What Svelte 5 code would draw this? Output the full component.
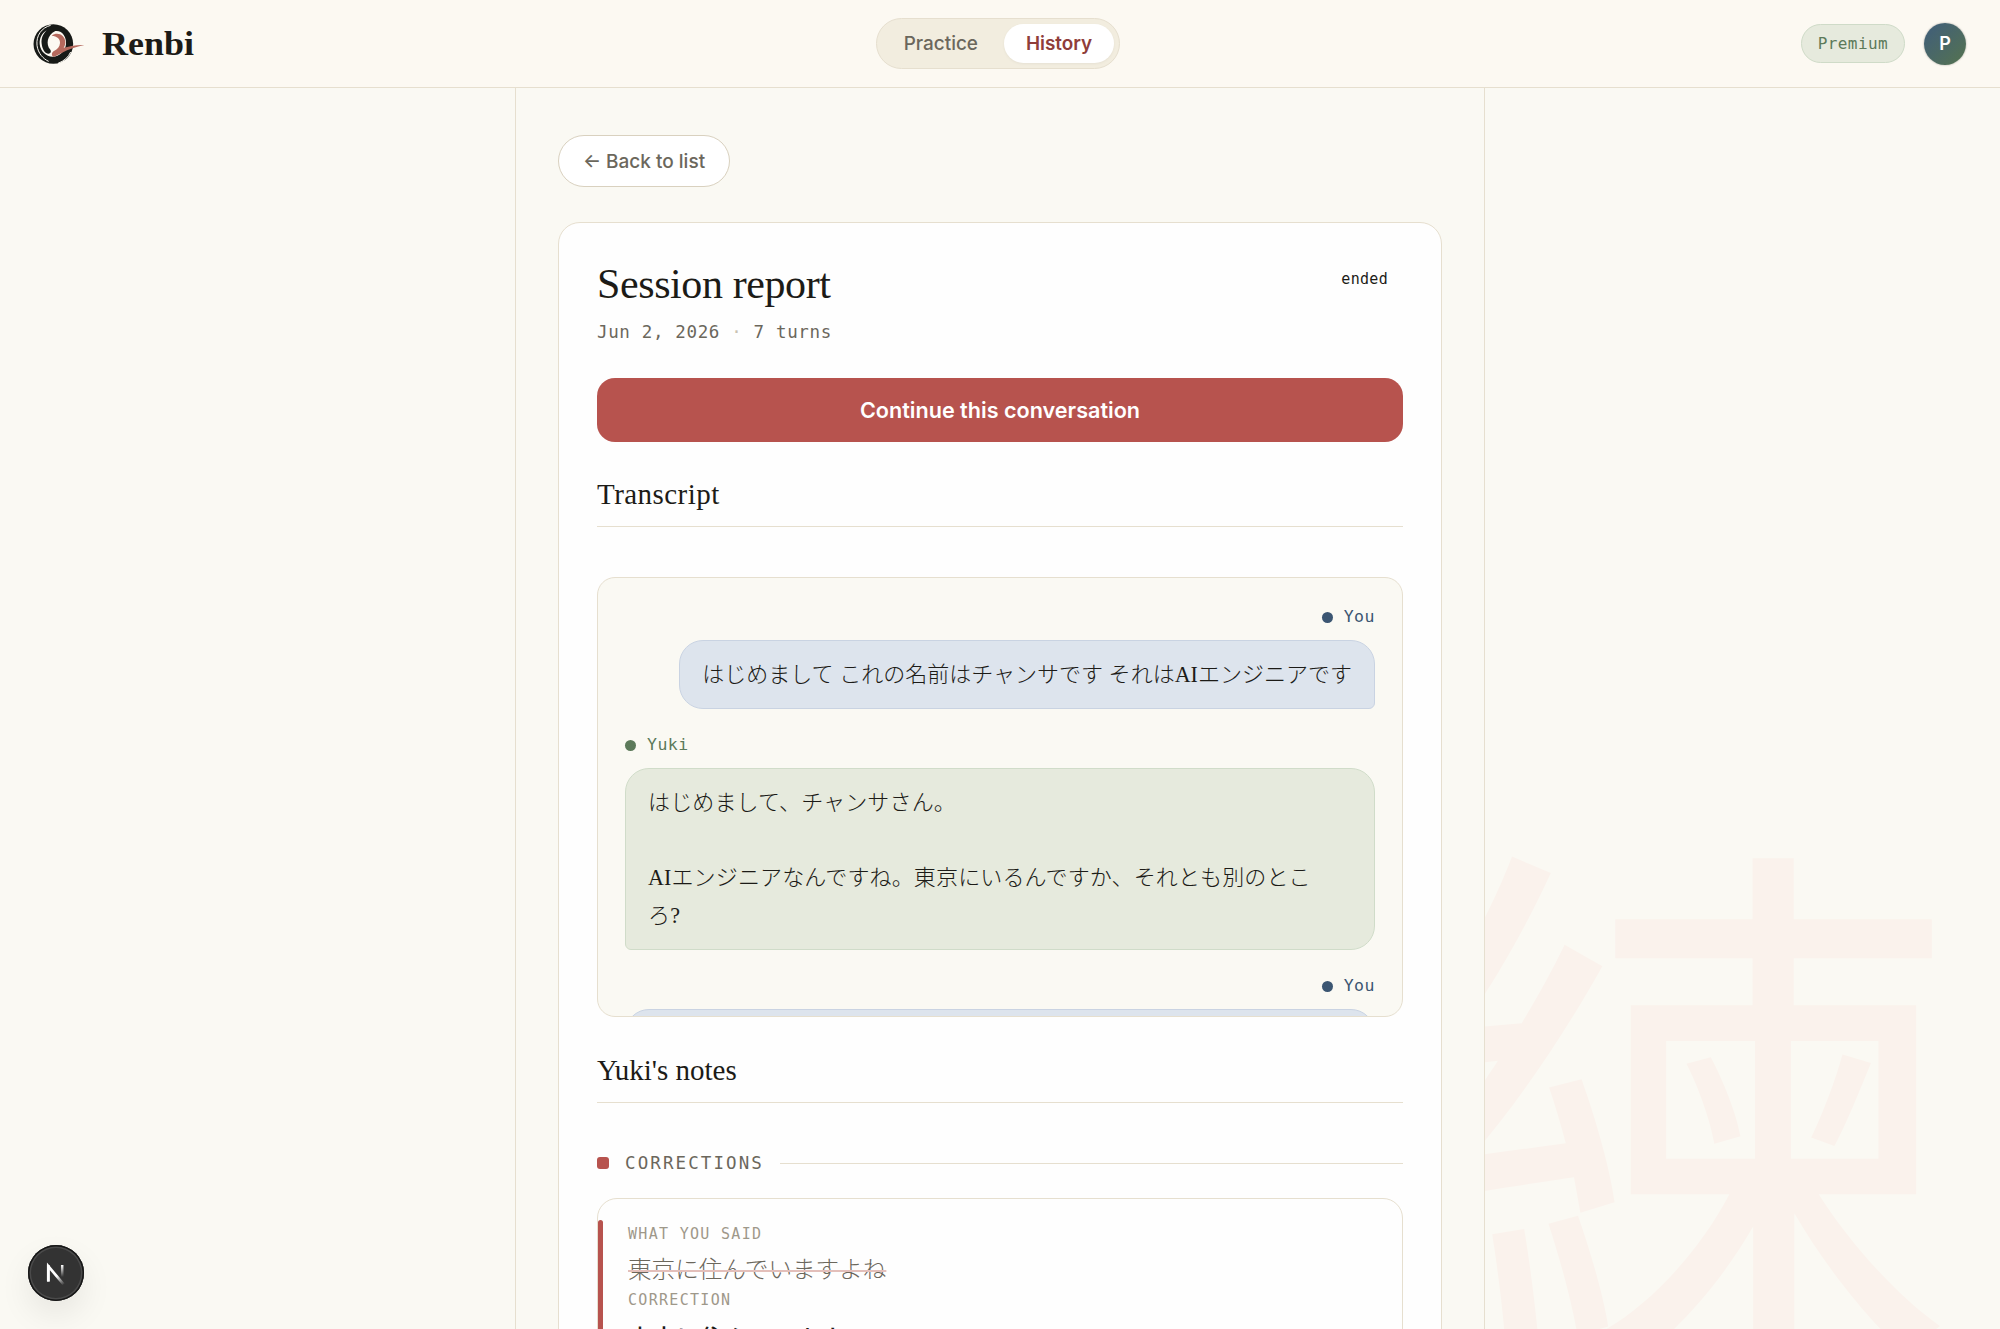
<script lang="ts">
  type Turn = { who: 'you' | 'yuki'; name: string; text: string };

  const turns: Turn[] = [
    { who: 'you', name: 'You', text: 'はじめまして これの名前はチャンサです それはAIエンジニアです' },
    {
      who: 'yuki',
      name: 'Yuki',
      text: 'はじめまして、チャンサさん。\n\nAIエンジニアなんですね。東京にいるんですか、それとも別のとこ\nろ?'
    },
    { who: 'you', name: 'You', text: '' }
  ];
</script>

<div class="page">
  <div class="watermark" lang="zh-Hant" aria-hidden="true">練</div>

  <header>
    <div class="brand">
      <svg class="logo" viewBox="99 70 156 120" aria-hidden="true">
        <circle cx="160" cy="130" r="59.5" fill="#171a17" />
        <path d="M166 91C186 88 200 108 198 130C196 152 178 168 158 168C138 168 121 152 119 130C118 112 126 98 140 89C129 100 123 113 125 129C127 145 134 157 144 159C152 160 155 153 150 146C138 132 140 104 166 91Z" fill="#fcf9f2" />
        <path d="M152 74C125 81 108 104 111 134C114 158 130 175 146 182" fill="none" stroke="#fcf9f2" stroke-width="3" />
        <path d="M212 154C205 170 192 181 174 188" fill="none" stroke="#fcf9f2" stroke-width="3" />
        <path d="M155 105C172 92 195 103 196 124C196 131 194 137 191 141C212 136 232 132 253 133C228 138 206 146 186 156C176 161 168 167 160 168C153 165 155 155 162 151C173 145 179 139 180 127C181 115 171 106 155 105Z" fill="#b5695d" />
      </svg>
      <span class="brand-name">Renbi</span>
    </div>
    <nav>
      <button class="tab">Practice</button>
      <button class="tab active">History</button>
    </nav>
    <div class="account">
      <span class="plan">Premium</span>
      <span class="avatar">P</span>
    </div>
  </header>

  <main>
    <button class="back">← Back to list</button>

    <article>
      <div class="report-head">
        <div>
          <h1>Session report</h1>
          <p class="meta">Jun 2, 2026 <span class="sep">·</span> 7 turns</p>
        </div>
        <span class="status">ended</span>
      </div>

      <button class="continue">Continue this conversation</button>

      <h2>Transcript</h2>
      <section class="transcript">
        {#each turns as turn}
          <div class="turn {turn.who}">
            <div class="speaker"><i></i>{turn.name}</div>
            <div class="bubble" class:full={!turn.text || turn.who === 'yuki'}>{turn.text}</div>
          </div>
        {/each}
      </section>

      <h2 class="notes">Yuki's notes</h2>
      <div class="group"><i></i><span>CORRECTIONS</span><hr /></div>
      <section class="correction">
        <div class="label">WHAT YOU SAID</div>
        <div class="said">東京に住んでいますよね</div>
        <div class="label">CORRECTION</div>
        <div class="fixed">東京に住んでいます</div>
      </section>
    </article>
  </main>

  <button class="devtools" aria-label="Developer tools">
    <svg viewBox="0 0 56 56">
      <defs>
        <linearGradient id="diag" x1="30" y1="30" x2="37" y2="39" gradientUnits="userSpaceOnUse">
          <stop stop-color="#fff" />
          <stop offset="1" stop-color="#fff" stop-opacity="0" />
        </linearGradient>
        <linearGradient id="stem" x1="34" y1="20" x2="34" y2="32" gradientUnits="userSpaceOnUse">
          <stop stop-color="#fff" />
          <stop offset="1" stop-color="#fff" stop-opacity="0" />
        </linearGradient>
      </defs>
      <path d="M20.3 36.5V21.2L35.6 39.4" fill="none" stroke="url(#diag)" stroke-width="2.7" />
      <path d="M20.3 36.5V20" stroke="#fff" stroke-width="2.7" />
      <path d="M34.2 20V32" stroke="url(#stem)" stroke-width="2.5" />
    </svg>
  </button>
</div>

<style>
  :global(body) {
    overflow: hidden;
    background: #faf9f3;
  }
  .page {
    --line: #e6dfcf;
    --ink: #1c1b17;
    --mono: 'DejaVu Sans Mono', monospace;
    --serif: 'Liberation Serif', 'Noto Sans CJK JP', serif;
    position: relative;
    display: flex;
    flex-direction: column;
    height: 1329px;
    overflow: hidden;
    background: #faf9f3;
    color: var(--ink);
    font-family: Inter, 'Liberation Sans', sans-serif;
  }
  button {
    font-family: inherit;
    cursor: pointer;
  }
  .watermark {
    position: absolute;
    right: 38px;
    bottom: -53px;
    color: #faf2ec;
    font: 400 580px/1 'Noto Sans CJK TC', sans-serif;
  }
  header {
    position: relative;
    display: grid;
    grid-template-columns: 1fr auto 1fr;
    align-items: center;
    flex: none;
    height: 88px;
    box-sizing: border-box;
    padding: 0 34px 0 33px;
    background: #fcf9f2;
    border-bottom: 1px solid var(--line);
  }
  .brand {
    display: flex;
    align-items: center;
    gap: 17px;
  }
  .logo {
    width: 52px;
    height: 40px;
  }
  .brand-name {
    font: 700 33px/40px var(--serif);
    transform: scaleX(1.09);
    transform-origin: left;
  }
  nav {
    display: flex;
    gap: 4px;
    margin-right: 3px;
    padding: 5px;
    background: #f2eddf;
    border: 1px solid var(--line);
    border-radius: 26px;
  }
  .tab {
    padding: 0 22px;
    border: 0;
    border-radius: 20px;
    background: none;
    color: #6b675c;
    font-size: 18.9px;
    font-weight: 500;
    line-height: 39px;
  }
  .tab.active {
    background: #fff;
    color: #8f3d3a;
    font-weight: 600;
    box-shadow: 0 1px 3px #1c1b170d;
  }
  .account {
    display: flex;
    align-items: center;
    justify-content: flex-end;
    gap: 19px;
  }
  .plan {
    padding: 0 16px;
    border: 1px solid #cfdbc8;
    border-radius: 20px;
    background: #e6eadd;
    color: #5c7a5a;
    font: 16px/37px var(--mono);
    letter-spacing: 0.4px;
  }
  .avatar {
    width: 42px;
    border-radius: 50%;
    background: linear-gradient(135deg, #3f5d7c, #55734f);
    color: #fff;
    font-size: 18px;
    font-weight: 600;
    line-height: 42px;
    text-align: center;
    box-shadow: 0 0 2px #1c1b1766;
  }
  main {
    position: relative;
    flex: 1;
    width: 970px;
    box-sizing: border-box;
    margin: 0 auto;
    padding: 47px 42px 0;
    background: #faf9f3;
    border: solid var(--line);
    border-width: 0 1px;
  }
  .back {
    display: block;
    height: 52px;
    width: 172px;
    padding: 0;
    border: 1px solid #d9d1bf;
    border-radius: 26px;
    background: #fff;
    color: #6b675c;
    font-size: 19px;
    font-weight: 500;
  }
  article {
    margin-top: 35px;
    height: 1300px;
    padding: 38px 38px 0;
    background: #fefefe;
    border: 1px solid var(--line);
    border-radius: 22px;
  }
  .report-head {
    display: flex;
    justify-content: space-between;
    height: 117px;
  }
  h1 {
    margin: 0;
    font: 400 42px/46px var(--serif);
    letter-spacing: -0.4px;
  }
  .meta {
    margin: 13px 0 0;
    color: #6b675c;
    font: 17.5px/24px var(--mono);
    letter-spacing: 0.65px;
  }
  .sep {
    color: #c9c2b2;
  }
  .status {
    padding: 8px 15px;
    font: 15px/20px var(--mono);
    letter-spacing: 0.3px;
  }
  .continue {
    display: block;
    width: 100%;
    height: 64px;
    border: 0;
    border-radius: 18px;
    background: #b7534e;
    color: #fff;
    font-size: 21.6px;
    font-weight: 600;
  }
  h2 {
    margin: 34px 0 50px;
    padding-bottom: 14px;
    border-bottom: 1px solid var(--line);
    font: 400 29px/36px var(--serif);
    letter-spacing: 0.45px;
  }
  h2.notes {
    margin-top: 35px;
    letter-spacing: 0;
  }
  .transcript {
    height: 380px;
    overflow: hidden;
    padding: 29px 27px;
    background: #faf9f3;
    border: 1px solid var(--line);
    border-radius: 18px;
  }
  .turn {
    display: flex;
    flex-direction: column;
    align-items: flex-start;
    gap: 13px;
    margin-bottom: 26px;
  }
  .turn.you {
    align-items: flex-end;
  }
  .speaker {
    display: flex;
    align-items: center;
    gap: 11px;
    color: #5c7a5a;
    font: 16.5px/20px var(--mono);
    letter-spacing: 0.5px;
  }
  .speaker i {
    width: 11px;
    height: 11px;
    border-radius: 50%;
    background: #5c7a5a;
  }
  .you .speaker {
    color: #3b5672;
  }
  .you .speaker i {
    background: #3b5672;
  }
  .bubble {
    min-height: 37.4px;
    padding: 15px 22px;
    border: 1px solid #d0dcc9;
    border-radius: 24px 24px 24px 6px;
    background: #e6eadd;
    font: 300 22.02px/37.4px var(--serif);
    white-space: pre-wrap;
  }
  .bubble.full {
    align-self: stretch;
  }
  .yuki .bubble {
    letter-spacing: 0.12px;
  }
  .you .bubble {
    border-color: #c9d3e2;
    border-radius: 24px 24px 6px 24px;
    background: #dde4ed;
  }
  .group {
    display: flex;
    align-items: center;
    gap: 16px;
    margin-bottom: 25px;
    color: #6b675c;
    font: 17.5px/20px var(--mono);
    letter-spacing: 2.1px;
  }
  .group i {
    width: 12px;
    height: 12px;
    border-radius: 3px;
    background: #b7534e;
  }
  .group hr {
    flex: 1;
    height: 1px;
    margin: 0;
    border: 0;
    background: var(--line);
  }
  .correction {
    position: relative;
    height: 300px;
    padding: 25px 30px;
    border: 1px solid var(--line);
    border-radius: 20px;
  }
  .correction::before {
    content: '';
    position: absolute;
    left: 0;
    top: 21px;
    bottom: 21px;
    width: 4.5px;
    border-radius: 3px;
    background: #b7534e;
  }
  .label {
    color: #9e988a;
    font: 15px/20px var(--mono);
    letter-spacing: 1.3px;
  }
  .said {
    margin: 6px 0 0;
    color: #6b675c;
    font: 300 23.6px/40px var(--serif);
    text-decoration: line-through 2px #e3bfba;
  }
  .fixed {
    margin-top: 8px;
    font: 500 24px/42px var(--serif);
  }
  .devtools {
    position: absolute;
    left: 28px;
    bottom: 28px;
    width: 56px;
    height: 56px;
    padding: 0;
    border: 0;
    border-radius: 50%;
    background: #333;
    box-shadow:
      inset 0 0 0 1.5px #171717,
      inset 0 0 0 3px #4a4a4a,
      0 14px 32px #00000014;
  }
  .devtools svg {
    display: block;
  }
</style>
